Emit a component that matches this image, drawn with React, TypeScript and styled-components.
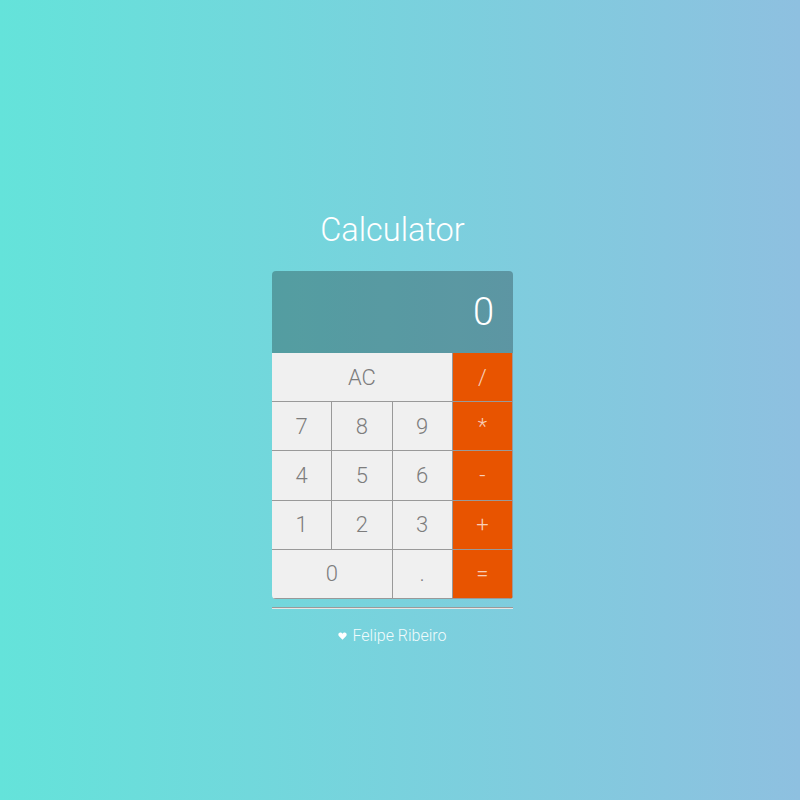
import React from "react";
import styled, { createGlobalStyle } from "styled-components";

const GlobalStyle = createGlobalStyle`
  html, body {
    margin: 0;
    padding: 0;
    height: 100%;
  }
  body {
    background: linear-gradient(to right, rgb(100, 227, 218), rgb(142, 192, 224));
    font-family: Roboto, "Liberation Sans", sans-serif;
    color: #fff;
  }
`;

const Page = styled.div`
  width: 785px;
  height: 800px;
  display: flex;
  flex-direction: column;
  align-items: center;
  padding-top: 210px;
  box-sizing: border-box;
`;

const Title = styled.h1`
  margin: 0 0 21px;
  font-size: 32.5px;
  line-height: 40px;
  font-weight: 300;
  color: #fff;
`;

const Calculator = styled.div`
  width: 241px;
  height: 328px;
  border-radius: 4px;
  overflow: hidden;
  display: grid;
  grid-template-columns: repeat(4, 1fr);
  grid-template-rows: 82px repeat(5, 1fr);
`;

const Display = styled.div`
  grid-column: span 4;
  background-color: rgba(0, 0, 0, 0.267);
  display: flex;
  justify-content: flex-end;
  align-items: center;
  padding: 0 19px 0 20px;
  font-size: 38px;
  font-weight: 300;
  color: #fff;
`;

const Key = styled.button<{ $span?: number; $op?: boolean }>`
  grid-column: span ${(p) => p.$span ?? 1};
  font-family: Roboto, "Liberation Sans", sans-serif;
  font-size: 22px;
  font-weight: 300;
  padding: 0;
  margin: 0;
  border: none;
  border-right: 1px solid #999;
  border-bottom: 1px solid #999;
  outline: none;
  background-color: ${(p) => (p.$op ? "#e85400" : "#f0f0f0")};
  color: ${(p) => (p.$op ? "rgba(255, 255, 255, 0.72)" : "#7d7d7d")};
  display: flex;
  align-items: center;
  justify-content: center;
`;

const Rule = styled.hr`
  width: 241px;
  margin: 8px 0;
  border: none;
  border-top: 1px solid #9a9a9a;
  border-bottom: 1px solid #e6e6e6;
  box-sizing: border-box;
  height: 2px;
`;

const Footer = styled.div`
  margin-top: 9px;
  font-size: 16px;
  font-weight: 300;
  color: #f0fbfc;
  display: flex;
  align-items: center;
  gap: 5px;
`;

const Heart = () => (
  <svg width="9" height="8" viewBox="0 0 10 9" aria-hidden="true">
    <path
      d="M5 8.6 L1.1 4.8 C-0.3 3.4 0.2 0.6 2.5 0.5 C3.6 0.5 4.4 1.1 5 2 C5.6 1.1 6.4 0.5 7.5 0.5 C9.8 0.6 10.3 3.4 8.9 4.8 Z"
      fill="#fff"
    />
  </svg>
);

const keys: { label: string; span?: number; op?: boolean }[] = [
  { label: "AC", span: 3 },
  { label: "/", op: true },
  { label: "7" },
  { label: "8" },
  { label: "9" },
  { label: "*", op: true },
  { label: "4" },
  { label: "5" },
  { label: "6" },
  { label: "-", op: true },
  { label: "1" },
  { label: "2" },
  { label: "3" },
  { label: "+", op: true },
  { label: "0", span: 2 },
  { label: "." },
  { label: "=", op: true },
];

export default function App() {
  return (
    <>
      <GlobalStyle />
      <Page>
        <Title>Calculator</Title>
        <Calculator>
          <Display>0</Display>
          {keys.map((k) => (
            <Key key={k.label} $span={k.span} $op={k.op}>
              {k.label}
            </Key>
          ))}
        </Calculator>
        <Rule />
        <Footer>
          <Heart />
          <span>Felipe Ribeiro</span>
        </Footer>
      </Page>
    </>
  );
}
